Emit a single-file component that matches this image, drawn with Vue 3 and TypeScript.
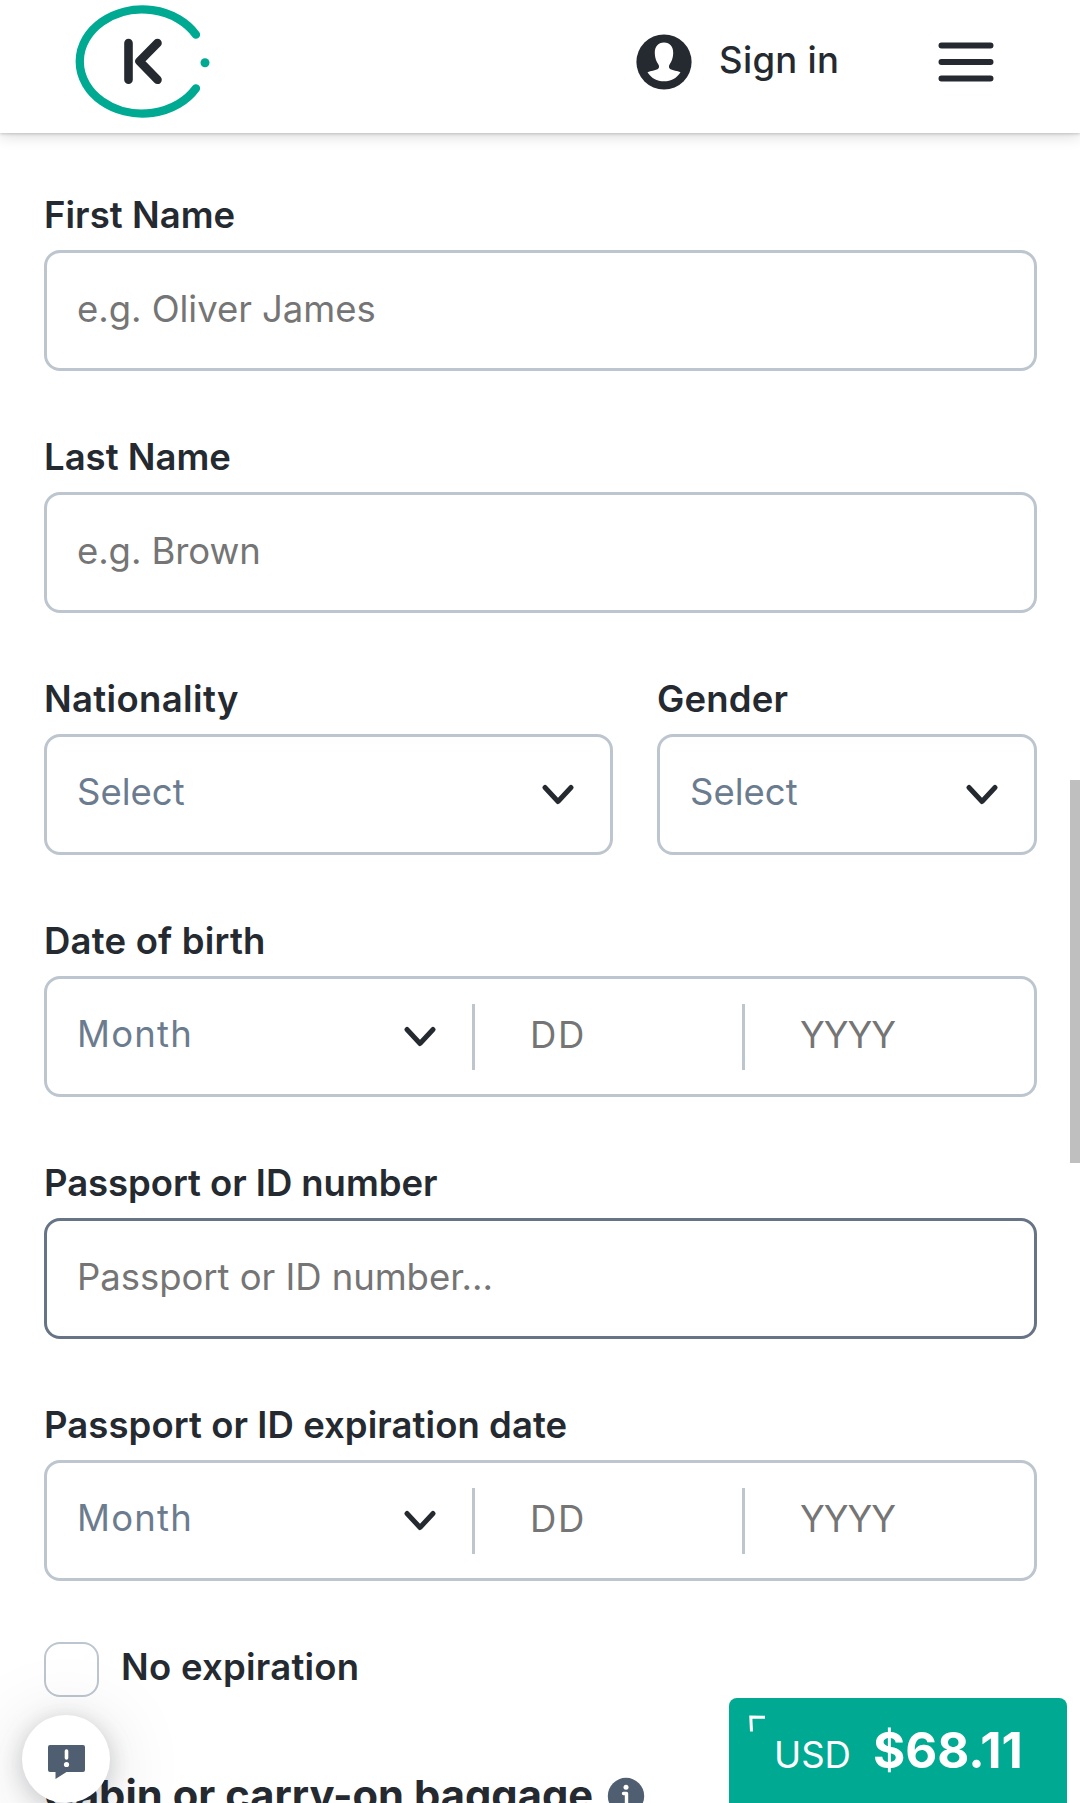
<script setup lang="ts">
interface Part { text: string; kind: 'input' | 'select'; track: number; cls: string }
interface Field { label: string; track: number; cls: string; active?: boolean; parts: Part[] }

const dateParts = (): Part[] => [
  { text: 'Month', kind: 'select', track: 1.2, cls: 'month' },
  { text: 'DD', kind: 'input', track: 1.6, cls: 'day' },
  { text: 'YYYY', kind: 'input', track: -1, cls: 'year' },
]

const rows: Field[][] = [
  [{ label: 'First Name', track: 0.05, cls: 'full', parts: [{ text: 'e.g. Oliver James', kind: 'input', track: -0.05, cls: 'whole' }] }],
  [{ label: 'Last Name', track: 0, cls: 'full', parts: [{ text: 'e.g. Brown', kind: 'input', track: -0.1, cls: 'whole' }] }],
  [
    { label: 'Nationality', track: 0.35, cls: 'nationality', parts: [{ text: 'Select', kind: 'select', track: 0, cls: 'whole' }] },
    { label: 'Gender', track: 0.2, cls: 'gender', parts: [{ text: 'Select', kind: 'select', track: 0, cls: 'whole' }] },
  ],
  [{ label: 'Date of birth', track: 0.2, cls: 'full', parts: dateParts() }],
  [{ label: 'Passport or ID number', track: -0.05, cls: 'full', active: true, parts: [{ text: 'Passport or ID number...', kind: 'input', track: -0.05, cls: 'whole' }] }],
  [{ label: 'Passport or ID expiration date', track: 0.07, cls: 'full', parts: dateParts() }],
]
</script>

<template>
  <div class="page">
    <header class="bar">
      <svg class="logo" width="140" height="124" viewBox="70 0 140 124" fill="none" stroke-linecap="round" stroke-linejoin="round">
        <path d="M196 34.7A62.6 52 0 1 0 196 88.3" stroke="#00a991" stroke-width="8.3" />
        <circle cx="205" cy="62.7" r="4.5" fill="#00a991" />
        <path d="M128.5 43V79.8M157.5 43L139.5 61.3L157.5 79.8" stroke="#252a31" stroke-width="8.6" />
      </svg>
      <div class="account">
        <svg width="56" height="56" viewBox="-28 -28 56 56">
          <circle r="27.6" fill="#252a31" />
          <path d="M0-19.5C6-19.5 9.4-15 9.2-9C9-3.500 7.500-.5 5.600 2.500C4.500 4.300 4.700 6.300 6.500 7.200C9 8.400 13 8.800 16.500 10.200C13 16 7 19.300 0 19.300C-7 19.300-13 16-16.500 10.200C-13 8.800-9 8.400-6.500 7.200C-4.700 6.300-4.500 4.300-5.600 2.500C-7.500-.5-9-3.500-9.200-9C-9.400-15-6-19.500 0-19.500Z" fill="#fff" />
        </svg>
        <span>Sign in</span>
      </div>
      <svg class="menu" width="56" height="40" viewBox="938 42 56 40" stroke="#252a31" stroke-width="5.8" stroke-linecap="round">
        <path d="M941.400 45.500H990.600M941.400 62H990.600M941.400 78.500H990.600" />
      </svg>
    </header>

    <main class="form">
      <div v-for="(row, r) in rows" :key="r" class="row">
        <div v-for="f in row" :key="f.label" class="field" :class="f.cls">
          <div class="label strong"><span :style="{ letterSpacing: f.track + 'px' }">{{ f.label }}</span></div>
          <div class="box" :class="{ active: f.active }">
            <div v-for="p in f.parts" :key="p.text" class="part" :class="[p.kind, p.cls]">
              <span class="hint" :style="{ letterSpacing: p.track + 'px' }">{{ p.text }}</span>
              <svg v-if="p.kind === 'select'" class="chevron" width="32" height="22" viewBox="0 0 32 22" fill="none" stroke="#252a31" stroke-width="5" stroke-linecap="round" stroke-linejoin="round">
                <path d="M3 3.500L16 17.500L29 3.500" />
              </svg>
            </div>
          </div>
        </div>
      </div>
      <div class="check"><i class="tick"></i><span class="strong">No expiration</span></div>
      <h2 class="baggage"><span>Cabin or carry-on baggage</span>
        <svg width="38" height="38" viewBox="-19 -19 38 38">
          <circle r="18.2" fill="#4f5e71" />
          <circle cy="-8.800" r="2.500" fill="#fff" />
          <path d="M-2.500-2.500H.5V10" stroke="#fff" stroke-width="3.400" stroke-linejoin="round" stroke-linecap="round" fill="none" />
        </svg>
      </h2>
    </main>

    <div class="thumb"></div>
    <div class="feedback">
      <svg width="37" height="35" viewBox="0 0 37 35">
        <path d="M2 0H35Q37 0 37 2V25Q37 27 35 27H18.500L7.500 34V27H2Q0 27 0 25V2Q0 0 2 0Z" fill="#4f5e71" />
        <path d="M18.500 6V13" stroke="#fff" stroke-width="3.600" stroke-linecap="round" />
        <circle cx="18.500" cy="19.500" r="2.600" fill="#fff" />
      </svg>
    </div>
    <div class="price">
      <svg class="corner" width="17" height="17" viewBox="0 0 17 17" fill="none" stroke="#fff" stroke-width="3"><path d="M2.500 16.500L1.800 2L16 2.300" /></svg>
      <span class="cur">USD</span><span class="amt">$68.11</span>
    </div>
  </div>
</template>

<style>
body { margin: 0; background: #fff; }
</style>

<style scoped>
.page { position: relative; width: 1080px; height: 1803px; overflow: hidden; background: #fff; color: #252a31; font: 400 36.5px/48px Inter, "Liberation Sans", sans-serif; white-space: nowrap; }
.strong { font-weight: 600; }
.bar { box-sizing: border-box; height: 133px; display: flex; align-items: flex-start; padding-left: 70px; box-shadow: 0 1px 3px rgba(0,0,0,.18), 0 3px 14px rgba(0,0,0,.15); }
.logo { flex: none; }
.account { display: flex; align-items: center; margin-left: 426px; height: 124px; }
.account svg { flex: none; margin-right: 27px; }
.account span { width: 190px; margin-bottom: 4px; font-weight: 500; letter-spacing: .3px; }
.menu { margin-top: 42px; margin-left: 29px; }
.form { padding: 60px 43px 0 44px; }
.row { display: flex; justify-content: space-between; height: 242px; }
.full { width: 993px; }
.nationality { width: 569px; }
.gender { width: 380px; }
.label { height: 57px; line-height: 44px; }
.box { box-sizing: border-box; height: 121px; border: 3px solid #bdc6cf; border-radius: 16px; display: flex; align-items: center; }
.box.active { border-color: #667485; }
.part { display: flex; align-items: center; justify-content: space-between; box-sizing: border-box; height: 66px; padding-left: 30px; color: #757575; }
.hint { padding-bottom: 3px; }
.part.select { color: #6c7c8f; padding-right: 36px; }
.select .hint { padding-bottom: 5px; }
.whole { width: 100%; }
.month { width: 425px; }
.day { width: 270px; border-left: 3px solid #bdc6cf; padding-left: 55px; }
.year { border-left: 3px solid #bdc6cf; padding-left: 55px; }
.chevron { flex: none; }
.check { display: flex; align-items: center; height: 55px; margin-top: -3px; }
.check span { padding-bottom: 5px; letter-spacing: .25px; }
.tick { box-sizing: border-box; width: 55px; height: 55px; border: 2px solid #bdc6cf; border-radius: 16px; margin-right: 22px; }
.baggage { display: flex; align-items: center; height: 54px; margin: 72px 0 0; font-size: 41.7px; line-height: 50px; font-weight: 700; letter-spacing: .04px; }
.baggage span { padding-bottom: 3px; }
.baggage svg { margin-left: 14px; }
.thumb { position: absolute; left: 1070px; top: 780px; width: 10px; height: 383px; background: #bfbfbf; }
.feedback { position: absolute; left: 22px; top: 1715px; width: 88px; height: 88px; border-radius: 50%; background: #fff; box-shadow: 0 4px 24px rgba(37,42,49,.22), 0 8px 80px rgba(37,42,49,.15); }
.feedback svg { display: block; margin: 30px 0 0 26px; }
.price { position: absolute; left: 729px; top: 1698px; width: 338px; height: 105px; border-radius: 8px 8px 0 0; background: #00a991; color: #fff; display: flex; align-items: baseline; }
.corner { position: absolute; left: 20px; top: 17px; }
.cur { margin-left: 45px; }
.amt { font-size: 49.300px; font-weight: 700; line-height: 104px; margin-left: 22px; }
</style>
